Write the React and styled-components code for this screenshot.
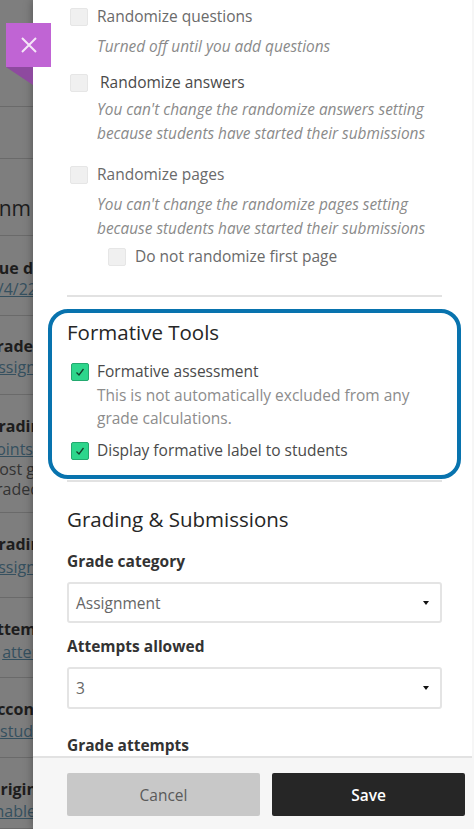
import React from "react";
import styled, { createGlobalStyle } from "styled-components";

const Global = createGlobalStyle`
  html, body { margin: 0; padding: 0; background: #fff; }
  #root { width: 474px; height: 829px; overflow: hidden; }
  * { box-sizing: border-box; }
  body { font-family: "Open Sans", "Liberation Sans", sans-serif; }
`;

const Page = styled.div`
  position: relative;
  display: flex;
  width: 474px;
  height: 829px;
  overflow: hidden;
`;

const Backdrop = styled.div`
  flex: 0 0 33px;
  display: flex;
  flex-direction: column;
  overflow: hidden;
  background: #7e7e7e;
`;

const BackRow = styled.div`
  flex: 0 0 ${(p) => p.$h}px;
  padding-top: ${(p) => p.$top || 0}px;
  border-bottom: 1px solid #6a6a6a;
  display: flex;
  flex-direction: column;
  align-items: flex-end;
`;

const BackLine = styled.div`
  white-space: nowrap;
  margin-right: ${(p) => -(p.$bleed || 0)}px;
  font-size: ${(p) => (p.$big ? 21 : 16)}px;
  line-height: ${(p) => (p.$h ? p.$h : 20)}px;
  font-weight: ${(p) => (p.$bold ? 700 : 400)};
  color: ${(p) => (p.$link ? "#35505f" : p.$bold || p.$big ? "#1d1d1d" : "#333")};
  text-decoration: ${(p) => (p.$link ? "underline" : "none")};
`;

const Panel = styled.div`
  position: relative;
  flex: 1;
  min-width: 0;
  display: flex;
  flex-direction: column;
  background: #fff;
  border-right: 2px solid #f6f6f6;
  box-shadow: 0 0 9px rgba(0, 0, 0, 0.35);
`;

const Scroll = styled.div`
  flex: 1;
  min-height: 0;
  overflow: hidden;
  padding: 0 30px 0 34px;
`;

const CheckRow = styled.div`
  display: flex;
  align-items: center;
  margin-top: ${(p) => p.$mt || 0}px;
  margin-left: ${(p) => p.$ml ?? 3}px;
  height: 17px;
`;

const Box = styled.span`
  flex: 0 0 18px;
  width: 18px;
  height: 18px;
  border-radius: 2px;
  background: #f0f0f0;
  border: 1px solid #e6e6e6;
`;

const Label = styled.span`
  margin-left: ${(p) => p.$gap || 9}px;
  font-size: 15.5px;
  line-height: 17px;
  color: ${(p) => (p.$dark ? "#4a4a4a" : "#6a6a6a")};
  white-space: nowrap;
`;

const Note = styled.div`
  margin: ${(p) => p.$mt || 0}px 0 0 30px;
  font-size: 15.4px;
  line-height: 24px;
  font-style: italic;
  color: #8a8a8a;
  white-space: nowrap;
`;

const Rule = styled.hr`
  margin: ${(p) => p.$mt || 0}px 0 0;
  width: 375px;
  height: 2px;
  border: 0;
  background: #e2e2e2;
`;

const Highlight = styled.section`
  width: 413px;
  height: 170px;
  margin: 12px 0 0 -19px;
  padding: 6px 15px 0;
  border: 4px solid #0873ae;
  border-radius: 20px;
`;

const Heading = styled.h2`
  margin: ${(p) => p.$mt || 0}px 0 0;
  font-size: 20.5px;
  line-height: 27px;
  font-weight: 500;
  color: #262626;
  white-space: nowrap;
`;

const Green = styled.span`
  flex: 0 0 18px;
  width: 18px;
  height: 18px;
  display: flex;
  align-items: center;
  justify-content: center;
  border-radius: 2px;
  background: #2dd68c;
  border: 1px solid #23a96f;
`;

const Desc = styled.div`
  margin-left: 30px;
  margin-top: ${(p) => p.$mt || 0}px;
  font-size: 15.5px;
  line-height: 23px;
  color: #8c8c8c;
  white-space: nowrap;
`;

const Field = styled.div`
  margin-top: ${(p) => p.$mt || 0}px;
  font-size: 15.5px;
  line-height: 20px;
  font-weight: 700;
  color: #333;
  white-space: nowrap;
`;

const Select = styled.div`
  width: 375px;
  height: ${(p) => p.$h}px;
  margin-top: ${(p) => p.$mt || 11}px;
  display: flex;
  align-items: center;
  justify-content: space-between;
  padding: 0 11px 0 7px;
  border: 2px solid #e4e4e4;
  border-radius: 3px;
  font-size: 15.5px;
  color: #666;
`;

const Caret = styled.span`
  width: 0;
  height: 0;
  border-left: 3px solid transparent;
  border-right: 3px solid transparent;
  border-top: 4px solid #111;
`;

const Footer = styled.footer`
  flex: 0 0 73px;
  display: flex;
  gap: 12px;
  padding: 15px 7px 13px 34px;
  background: #f6f6f6;
  border-top: 2px solid #e2e2e2;
`;

const Button = styled.button`
  flex: 1;
  border: 0;
  border-radius: 2px;
  font-family: inherit;
  font-size: 15.5px;
  font-weight: ${(p) => (p.$primary ? 600 : 400)};
  color: ${(p) => (p.$primary ? "#fff" : "#5a5a5a")};
  background: ${(p) => (p.$primary ? "#262626" : "#c8c8c8")};
`;

const Close = styled.button`
  position: absolute;
  left: 6px;
  top: 23px;
  z-index: 3;
  width: 45px;
  height: 44px;
  padding: 0;
  border: 0;
  display: flex;
  align-items: center;
  justify-content: center;
  background: #c064d4;
  &::after {
    content: "";
    position: absolute;
    left: 0;
    top: 100%;
    border-top: 18px solid #8e4a9f;
    border-left: 27px solid transparent;
  }
`;

const back = [
  { h: 107 },
  { h: 52 },
  { h: 77, top: 34, lines: [{ t: "nm", big: 1, h: 30, bleed: -2 }] },
  { h: 80, top: 21, lines: [{ t: "ue d", bold: 1, h: 22 }, { t: "/4/22", link: 1, bleed: 4 }] },
  { h: 79, top: 19, lines: [{ t: "rade", bold: 1, h: 22 }, { t: "ssign", link: 1, bleed: 3 }] },
  { h: 118, top: 18, lines: [{ t: "radin", bold: 1, h: 26, bleed: 8 }, { t: "oints", link: 1 }, { t: "ost g", bleed: 2 }, { t: "raded", bleed: 7 }] },
  { h: 85, top: 18, lines: [{ t: "radin", bold: 1, h: 26, bleed: 8 }, { t: "ssign", link: 1, bleed: 3 }] },
  { h: 80, top: 18, lines: [{ t: "ttem", bold: 1, h: 26, bleed: 3 }, { t: "atter", link: 1, bleed: 5 }] },
  { h: 80, top: 19, lines: [{ t: "ccon", bold: 1, h: 24, bleed: 1 }, { t: "stud", link: 1 }] },
  { h: 71, top: 19, lines: [{ t: "rigin", bold: 1, h: 24, bleed: 4 }, { t: "nable", link: 1, bleed: 3 }] },
];

const Tick = () => (
  <svg width="12" height="12" viewBox="0 0 12 12" fill="none" stroke="#14402c" strokeWidth="1.3">
    <path d="M2.5 6.5 5 9l4.5-6" />
  </svg>
);

export default function App() {
  return (
    <Page>
      <Global />
      <Backdrop>
        {back.map((row, i) => (
          <BackRow key={i} $h={row.h} $top={row.top}>
            {(row.lines || []).map((l) => (
              <BackLine key={l.t} $big={l.big} $bold={l.bold} $link={l.link} $h={l.h} $bleed={l.bleed}>
                {l.t}
              </BackLine>
            ))}
          </BackRow>
        ))}
      </Backdrop>
      <Close aria-label="Close">
        <svg width="20" height="20" viewBox="0 0 20 20" stroke="#f4e6f7" strokeWidth="2" fill="none">
          <path d="M3 3l14 14M17 3 3 17" />
        </svg>
      </Close>
      <Panel>
        <Scroll>
          <CheckRow $mt={8}>
            <Box />
            <Label>Randomize questions</Label>
          </CheckRow>
          <Note $mt={10}>Turned off until you add questions</Note>
          <CheckRow $mt={15}>
            <Box />
            <Label $gap={12} $dark>Randomize answers</Label>
          </CheckRow>
          <Note $mt={7}>You can't change the randomize answers setting</Note>
          <Note>because students have started their submissions</Note>
          <CheckRow $mt={20}>
            <Box />
            <Label>Randomize pages</Label>
          </CheckRow>
          <Note $mt={10}>You can't change the randomize pages setting</Note>
          <Note>because students have started their submissions</Note>
          <CheckRow $mt={7} $ml={41}>
            <Box />
            <Label>Do not randomize first page</Label>
          </CheckRow>
          <Rule $mt={30} />
          <Highlight>
            <Heading>Formative Tools</Heading>
            <CheckRow $mt={17} $ml={4}>
              <Green><Tick /></Green>
              <Label $gap={8} $dark>Formative assessment</Label>
            </CheckRow>
            <Desc $mt={4}>This is not automatically excluded from any</Desc>
            <Desc>grade calculations.</Desc>
            <CheckRow $mt={12} $ml={4}>
              <Green><Tick /></Green>
              <Label $gap={8} $dark>Display formative label to students</Label>
            </CheckRow>
          </Highlight>
          <Rule $mt={1} />
          <Heading $mt={24}>Grading &amp; Submissions</Heading>
          <Field $mt={18}>Grade category</Field>
          <Select $h={41}>Assignment<Caret /></Select>
          <Field $mt={13}>Attempts allowed</Field>
          <Select $h={42}>3<Caret /></Select>
          <Field $mt={26}>Grade attempts</Field>
        </Scroll>
        <Footer>
          <Button>Cancel</Button>
          <Button $primary>Save</Button>
        </Footer>
      </Panel>
    </Page>
  );
}
